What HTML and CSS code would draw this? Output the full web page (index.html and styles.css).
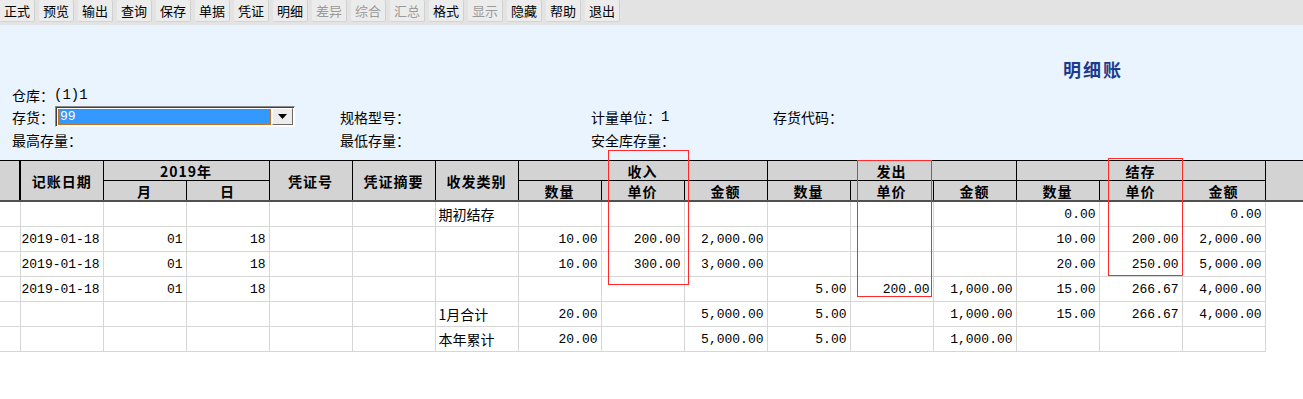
FILE: index.html
```html
<!DOCTYPE html>
<html lang="zh-CN">
  <head>
    <meta charset="UTF-8" />
    <title>明细账</title>
    <link rel="stylesheet" href="styles.css">
  </head>
  <body>
    <div class="toolbar">
      <span class="tool-btn">正式</span>
      <span class="tool-btn">预览</span>
      <span class="tool-btn">输出</span>
      <span class="tool-btn">查询</span>
      <span class="tool-btn">保存</span>
      <span class="tool-btn">单据</span>
      <span class="tool-btn">凭证</span>
      <span class="tool-btn">明细</span>
      <span class="tool-btn disabled">差异</span>
      <span class="tool-btn disabled">综合</span>
      <span class="tool-btn disabled">汇总</span>
      <span class="tool-btn">格式</span>
      <span class="tool-btn disabled">显示</span>
      <span class="tool-btn">隐藏</span>
      <span class="tool-btn">帮助</span>
      <span class="tool-btn">退出</span>
    </div>

    <div class="panel">
      <div class="title-row">
        <span class="title">明细账</span>
      </div>
      <div class="form">
        <div class="form-line">
          <span class="field">仓库：<span class="mono">(1)1</span></span>
        </div>
        <div class="form-line">
          <span class="field">
            存货：
            <span class="combo">
              <span class="combo-value"><span class="combo-text">99</span></span>
              <span class="combo-arrow">
                <svg width="9" height="5" viewBox="0 0 9 5"><path d="M0 0h9L4.5 5z" fill="#000"/></svg>
              </span>
            </span>
          </span>
          <span class="field">规格型号：</span>
          <span class="field">计量单位：<span class="mono">1</span></span>
          <span class="field">存货代码：</span>
        </div>
        <div class="form-line">
          <span class="field">最高存量：</span>
          <span class="field">最低存量：</span>
          <span class="field">安全库存量：</span>
          <span class="field"></span>
        </div>
      </div>
    </div>

    <div class="ledger-wrap">
      <table class="ledger">
        <colgroup>
          <col class="c-row">
          <col class="c"><col class="c"><col class="c"><col class="c"><col class="c">
          <col class="c"><col class="c"><col class="c"><col class="c"><col class="c">
          <col class="c"><col class="c"><col class="c"><col class="c"><col class="c">
          <col class="c-fill">
        </colgroup>
        <thead>
          <tr class="h1">
            <th rowspan="2" class="first"></th>
            <th rowspan="2">记账日期</th>
            <th colspan="2">2019年</th>
            <th rowspan="2">凭证号</th>
            <th rowspan="2">凭证摘要</th>
            <th rowspan="2">收发类别</th>
            <th colspan="3">收入</th>
            <th colspan="3">发出</th>
            <th colspan="3">结存</th>
            <th rowspan="2" class="fill"></th>
          </tr>
          <tr class="h2">
            <th>月</th><th>日</th>
            <th>数量</th><th>单价</th><th>金额</th>
            <th>数量</th><th>单价</th><th>金额</th>
            <th>数量</th><th>单价</th><th>金额</th>
          </tr>
        </thead>
        <tbody>
          <tr>
            <td></td><td></td><td></td><td></td><td></td><td></td>
            <td class="txt">期初结存</td>
            <td></td><td></td><td></td>
            <td></td><td></td><td></td>
            <td>0.00</td><td></td><td>0.00</td>
            <td class="blank"></td>
          </tr>
          <tr>
            <td></td><td class="date">2019-01-18</td><td>01</td><td>18</td><td></td><td></td>
            <td class="txt"></td>
            <td>10.00</td><td>200.00</td><td>2,000.00</td>
            <td></td><td></td><td></td>
            <td>10.00</td><td>200.00</td><td>2,000.00</td>
            <td class="blank"></td>
          </tr>
          <tr>
            <td></td><td class="date">2019-01-18</td><td>01</td><td>18</td><td></td><td></td>
            <td class="txt"></td>
            <td>10.00</td><td>300.00</td><td>3,000.00</td>
            <td></td><td></td><td></td>
            <td>20.00</td><td>250.00</td><td>5,000.00</td>
            <td class="blank"></td>
          </tr>
          <tr>
            <td></td><td class="date">2019-01-18</td><td>01</td><td>18</td><td></td><td></td>
            <td class="txt"></td>
            <td></td><td></td><td></td>
            <td>5.00</td><td>200.00</td><td>1,000.00</td>
            <td>15.00</td><td>266.67</td><td>4,000.00</td>
            <td class="blank"></td>
          </tr>
          <tr>
            <td></td><td></td><td></td><td></td><td></td><td></td>
            <td class="txt">1月合计</td>
            <td>20.00</td><td></td><td>5,000.00</td>
            <td>5.00</td><td></td><td>1,000.00</td>
            <td>15.00</td><td>266.67</td><td>4,000.00</td>
            <td class="blank"></td>
          </tr>
          <tr>
            <td></td><td></td><td></td><td></td><td></td><td></td>
            <td class="txt">本年累计</td>
            <td>20.00</td><td></td><td>5,000.00</td>
            <td>5.00</td><td></td><td>1,000.00</td>
            <td></td><td></td><td></td>
            <td class="blank"></td>
          </tr>
        </tbody>
      </table>

      <!-- annotation boxes drawn over the sheet -->
      <div class="mark mark-in"></div>
      <div class="mark mark-out"></div>
      <div class="mark mark-bal"></div>
    </div>
  </body>
</html>
```

FILE: styles.css
```css
body {
  margin: 0;
  background-color: #ffffff;
  font-family: "Noto Sans CJK SC", "DejaVu Sans", sans-serif;
  color: #000000;
}

.toolbar {
  height: 25px;
  background-color: #e3e3e3;
  display: flex;
  gap: 4px;
  align-items: flex-start;
  box-sizing: border-box;
}

.tool-btn {
  width: 35px;
  height: 22px;
  line-height: 21px;
  font-size: 13px;
  text-align: center;
  background-color: #ececec;
  border-radius: 2px;
  border-right: 1px solid #d0d0d0;
  border-bottom: 1px solid #d4d4d4;
  box-sizing: border-box;
  color: #000000;
}

.tool-btn.disabled {
  color: #9a9a9a;
}

.panel {
  height: 135px;
  background-color: #eaf4fe;
  box-sizing: border-box;
}

.title-row {
  display: flex;
  justify-content: flex-end;
  padding-top: 32px;
  padding-right: 180px;
  height: 60px;
  box-sizing: border-box;
}

.title {
  font-size: 18px;
  font-weight: bold;
  color: #1d3a8c;
  line-height: 24px;
  letter-spacing: 2px;
}

.form {
  padding-left: 12px;
}

.form-line {
  display: grid;
  grid-template-columns: 328px 251px 182px 200px;
  align-items: center;
  font-size: 14px;
  height: 23px;
}

.form-line:first-child {
  height: 20px;
}

.field {
  display: flex;
  align-items: center;
  white-space: nowrap;
  line-height: 20px;
}

.mono {
  font-family: "Liberation Mono", monospace;
  font-size: 14px;
  line-height: 20px;
}

.combo {
  margin-left: 1px;
  width: 240px;
  height: 21px;
  display: flex;
  border: 1px solid #8a8a8a;
  border-right-color: #ffffff;
  border-bottom-color: #ffffff;
  box-shadow: inset 1px 1px 0 #404040;
  box-sizing: border-box;
  background-color: #ffffff;
}

.combo-value {
  flex: 1;
  margin: 2px 0 1px 2px;
  background-color: #3399ff;
  outline: 1px dotted #c07020;
  outline-offset: -1px;
  display: flex;
  align-items: center;
}

.combo-text {
  color: #ffffff;
  font-family: "Liberation Mono", monospace;
  font-size: 13px;
  padding-left: 2px;
}

.combo-arrow {
  width: 21px;
  margin: 1px;
  background-color: #ececec;
  border: 1px solid #ffffff;
  border-right-color: #6a6a6a;
  border-bottom-color: #6a6a6a;
  box-sizing: border-box;
  display: flex;
  align-items: center;
  justify-content: center;
}

.ledger-wrap {
  position: relative;
}

.ledger {
  border-collapse: collapse;
  table-layout: fixed;
  width: 1303px;
}

.c-row {
  width: 20px;
}

.c {
  width: 83px;
}

.c-fill {
  width: 38px;
}

.ledger th {
  background-color: #d3d3d3;
  font-size: 14px;
  font-weight: bold;
  border: 1px solid #000000;
  padding: 0;
  line-height: 18px;
  letter-spacing: 1px;
}

.ledger .h1 th {
  height: 19px;
}

.ledger .h2 th {
  height: 19px;
  border-bottom: 2px solid #505050;
}

.ledger th[rowspan="2"] {
  border-bottom: 2px solid #505050;
}

.ledger th.first {
  border-left: none;
  border-right: 2px solid #000000;
}

.ledger th.fill {
  border-right: none;
}

.ledger td {
  height: 24px;
  border: 1px solid #d6d6d6;
  padding: 0 3px 0 0;
  text-align: right;
  font-family: "Liberation Mono", "Noto Sans CJK SC", monospace;
  font-size: 13px;
  white-space: nowrap;
  overflow: hidden;
}

.ledger td:first-child {
  border-left: none;
}

.ledger td.date {
  direction: rtl;
}

.ledger td.txt {
  text-align: left;
  padding: 0 0 0 3px;
  font-family: "Noto Sans CJK SC", sans-serif;
  font-size: 14px;
}

.ledger td.blank {
  border: none;
  border-left: 1px solid #d6d6d6;
}

.mark {
  position: absolute;
  z-index: 1;
  border: 1px solid #ff2a2a;
  box-sizing: border-box;
}

.mark-in {
  left: 608px;
  top: -10px;
  width: 81px;
  height: 135px;
}

.mark-out {
  left: 857px;
  top: 0;
  width: 75px;
  height: 137px;
}

.mark-bal {
  left: 1108px;
  top: -2px;
  width: 75px;
  height: 118px;
}
```
